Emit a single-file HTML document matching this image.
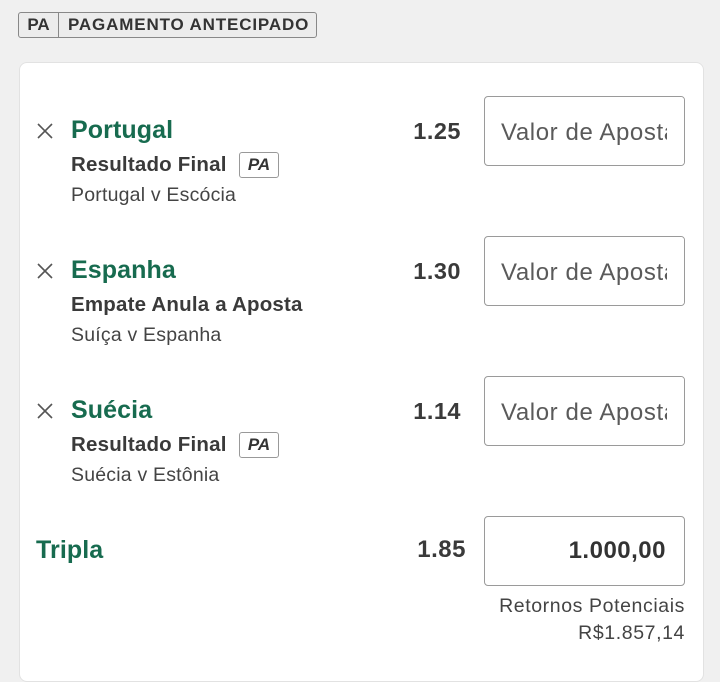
<!DOCTYPE html>
<html><head><meta charset="utf-8"><style>
*{margin:0;padding:0;box-sizing:border-box}
body{width:720px;height:646px;background:#f0f0f0;font-family:"Liberation Sans",Arial,sans-serif;position:relative;overflow:hidden;color:#3a3a3a}
.a{position:absolute;white-space:nowrap}
.hdr{left:18px;top:12px;width:299px;height:26px;border:1px solid #888;border-radius:3px;background:#ececec;font-weight:bold;font-size:17px;color:#333;line-height:24px}
.hdr .pa{position:absolute;left:0;top:0;width:40px;text-align:center;border-right:1px solid #888;height:24px}
.hdr .t{position:absolute;left:49px;top:0;letter-spacing:0.85px}
.card{left:19px;top:62px;width:685px;height:620px;background:#fff;border-radius:8px;border:1px solid #e2e2e2}
.x{left:36px;width:18px;height:18px}
.ti{left:71px;font-size:25px;font-weight:bold;color:#176b4f;line-height:28px;letter-spacing:0.1px}
.mk{left:71px;font-size:20.5px;font-weight:bold;color:#3a3a3a;line-height:24px;letter-spacing:0.2px}
.ev{left:71px;font-size:19.5px;color:#444;line-height:22px;letter-spacing:0.2px}
.od{width:80px;text-align:right;font-size:23.5px;font-weight:bold;color:#3a3a3a;line-height:26px;letter-spacing:0.5px}
.in{left:484px;width:201px;height:70px;border:1px solid #9a9a9a;border-radius:4px;overflow:hidden;background:#fff}
.in span{position:absolute;left:16px;top:23px;font-size:24px;color:#5a5a5a;line-height:26px;letter-spacing:0.6px}
.in i{position:absolute;right:0;top:0;width:17px;height:68px;background:#fff}
.pab{width:40px;height:26px;border:1px solid #999;border-radius:3px;font-style:italic;font-weight:bold;font-size:17px;text-align:center;line-height:24px;color:#333}
.rt{right:35px;font-size:19.5px;color:#444;line-height:22px;letter-spacing:0.6px}
</style></head><body>
<div class="a hdr"><span class="pa">PA</span><span class="t">PAGAMENTO ANTECIPADO</span></div>
<div class="a card"></div>

<svg class="a x" style="top:122px" viewBox="0 0 18 18"><path d="M2 2L16 16M16 2L2 16" stroke="#555" stroke-width="1.6"/></svg>
<div class="a ti" style="top:116px">Portugal</div>
<div class="a mk" style="top:153px">Resultado Final</div>
<div class="a pab" style="left:239px;top:152px">PA</div>
<div class="a ev" style="top:184px">Portugal v Escócia</div>
<div class="a od" style="left:381px;top:118px">1.25</div>
<div class="a in" style="top:96px"><span>Valor de Aposta</span><i></i></div>

<svg class="a x" style="top:262px" viewBox="0 0 18 18"><path d="M2 2L16 16M16 2L2 16" stroke="#555" stroke-width="1.6"/></svg>
<div class="a ti" style="top:256px">Espanha</div>
<div class="a mk" style="top:293px">Empate Anula a Aposta</div>
<div class="a ev" style="top:324px">Suíça v Espanha</div>
<div class="a od" style="left:381px;top:258px">1.30</div>
<div class="a in" style="top:236px"><span>Valor de Aposta</span><i></i></div>

<svg class="a x" style="top:402px" viewBox="0 0 18 18"><path d="M2 2L16 16M16 2L2 16" stroke="#555" stroke-width="1.6"/></svg>
<div class="a ti" style="top:396px">Suécia</div>
<div class="a mk" style="top:433px">Resultado Final</div>
<div class="a pab" style="left:239px;top:432px">PA</div>
<div class="a ev" style="top:464px">Suécia v Estônia</div>
<div class="a od" style="left:381px;top:398px">1.14</div>
<div class="a in" style="top:376px"><span>Valor de Aposta</span><i></i></div>

<div class="a ti" style="left:36px;top:536px">Tripla</div>
<div class="a od" style="left:386px;top:537px;font-size:24px">1.85</div>
<div class="a in" style="top:516px"><span style="left:auto;right:18px;top:21px;font-weight:bold;color:#333;font-size:24px;letter-spacing:0.5px">1.000,00</span></div>
<div class="a rt" style="top:595px">Retornos Potenciais</div>
<div class="a rt" style="top:622px">R$1.857,14</div>
</body></html>
